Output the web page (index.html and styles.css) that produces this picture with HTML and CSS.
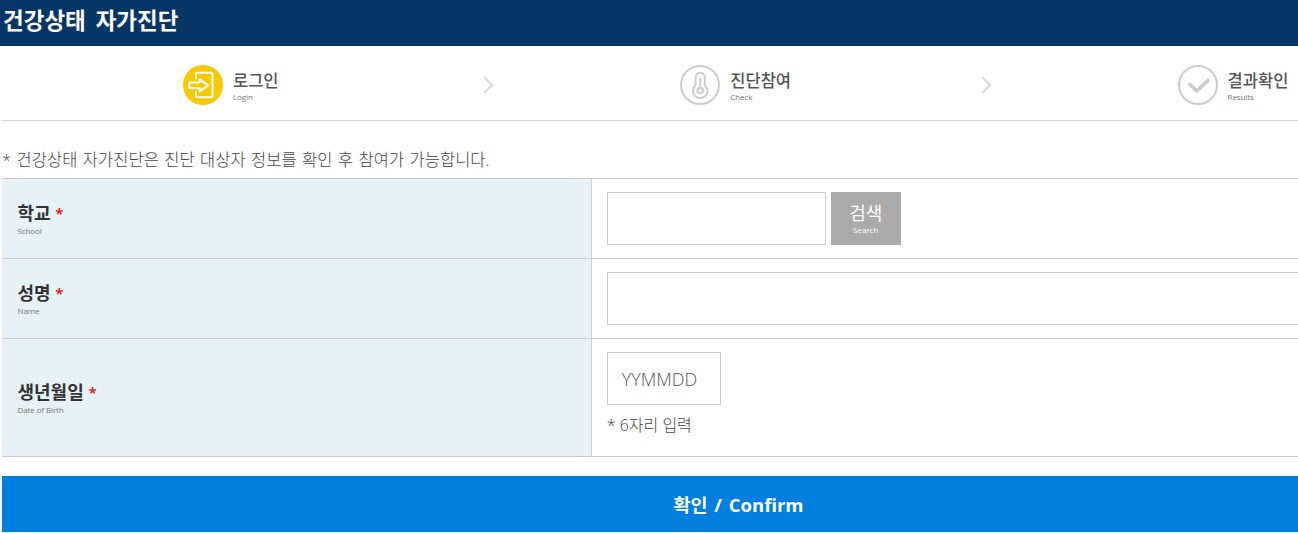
FILE: index.html
```html
<!DOCTYPE html>
<html lang="ko">
<head>
<meta charset="utf-8">
<title>건강상태 자가진단</title>
<link rel="stylesheet" href="styles.css">
</head>

<body>

<div id="header">
    <h1>건강상태 자가진단</h1>
</div>

<div id="container">
    <ul class="step">
        <li class="on">
            <svg class="icon" viewBox="0 0 40 40" width="40" height="40">
                <circle cx="20" cy="20" r="20" fill="#f8c800" />
                <path d="M13 14V9.200Q13 7.700 14.500 7.700H28Q29.500 7.700 29.500 9.200V30.800Q29.500 32.300 28 32.300H14.500Q13 32.300 13 30.800V26.500" />
                <path d="M6.300 17.600H16.800V14.400L25.200 20.400L16.800 26.400V23.200H6.300Z" />
            </svg>
            <p>로그인<span>Login</span></p>
        </li>
        <li>
            <svg class="icon" viewBox="0 0 40 40" width="40" height="40">
                <circle cx="20" cy="20" r="19" />
                <path d="M15.600 20.200V12.400a4.600 4.600 0 0 1 9.200 0V20.200a7.300 7.300 0 1 1 -9.200 0Z" />
                <path d="M20.200 13V22.500" />
                <circle cx="20.200" cy="25.500" r="2.800" />
            </svg>
            <p>진단참여<span>Check</span></p>
        </li>
        <li>
            <svg class="icon" viewBox="0 0 40 40" width="40" height="40">
                <circle cx="20" cy="20" r="19" />
                <path class="check" d="M11.800 19.300L18.700 26L30 15.500" />
            </svg>
            <p>결과확인<span>Results</span></p>
        </li>
    </ul>

    <p class="info">* 건강상태 자가진단은 진단 대상자 정보를 확인 후 참여가 가능합니다.</p>

    <table>
        <tr>
            <th>학교 <em>*</em><span>School</span></th>
            <td>
                <div class="search">
                    <input type="text" name="school" id="school" value="" />
                    <button type="button" id="btn_search">검색<span>Search</span></button>
                </div>
            </td>
        </tr>
        <tr>
            <th>성명 <em>*</em><span>Name</span></th>
            <td><input type="text" name="name" id="name" value="" /></td>
        </tr>
        <tr class="birth">
            <th>생년월일 <em>*</em><span>Date of Birth</span></th>
            <td>
                <input type="text" name="birth" id="birth" value="" placeholder="YYMMDD" maxlength="6" />
                <p>* 6자리 입력</p>
            </td>
        </tr>
    </table>

    <button type="button" id="btn_confirm">확인 / Confirm</button>
</div>

</body>
</html>
```

FILE: styles.css
```css
* {
    box-sizing: border-box;
    margin: 0px;
    padding: 0px;
}

body {
    overflow: hidden;
    background-color: #ffffff;
    color: #555555;
    font-family: 'Malgun Gothic', 'Open Sans', 'Noto Sans CJK KR', sans-serif;
    font-size: 16px;
}

input, button {
    font-family: inherit;
}

#header {
    height: 46px;
    padding-left: 3px;
    background-color: #063666;
    border-bottom: 1px solid #042c58;
}

#header h1 {
    color: #ffffff;
    font-size: 22.500px;
    line-height: 41px;
    font-weight: 700;
    word-spacing: 4px;
}

#container {
    width: 1473px;
    margin-left: 2px;
}

.step {
    display: flex;
    height: 75px;
    border-bottom: 1px solid #d9d9d9;
    list-style: none;
}

.step li {
    display: flex;
    flex: 0 0 497.300px;
    align-items: center;
    padding: 4px 0px 0px 181px;
}

/* arrow between steps */
.step li:not(:last-child)::after {
    content: "";
    width: 10px;
    height: 10px;
    margin: 0px 8px 0px auto;
    border-top: 2px solid #d9d9d9;
    border-right: 2px solid #d9d9d9;
    transform: rotate(45deg);
}

.icon {
    flex: none;
    margin-right: 10px;
    fill: none;
    stroke: #cccccc;
    stroke-width: 2;
    stroke-linejoin: round;
}

.on .icon {
    stroke: #ffffff;
}

.on .icon circle {
    stroke: none;
}

.icon .check {
    stroke-width: 3.6;
    stroke-linecap: round;
}

.step p {
    padding-top: 4px;
    font-size: 16.500px;
    line-height: 20px;
    font-weight: 500;
}

.step span, th span {
    display: block;
    color: #777777;
    font-size: 8px;
    line-height: 12px;
    font-weight: 400;
    letter-spacing: -0.1px;
}

.info {
    height: 57px;
    padding-top: 27px;
    color: #444444;
    font-size: 16.500px;
    line-height: 24px;
    font-weight: 300;
    word-spacing: 1px;
    letter-spacing: 0.050px;
}

table {
    width: 100%;
    table-layout: fixed;
    border-collapse: collapse;
}

tr {
    height: 80px;
    border-top: 1px solid #cccccc;
    border-bottom: 1px solid #cccccc;
}

.birth {
    height: 118px;
}

th {
    width: 40%;
    padding-left: 15.500px;
    border-right: 1px solid #cccccc;
    background-color: #e6f2f7;
    color: #333333;
    font-size: 18px;
    line-height: 24px;
    text-align: left;
}

th em {
    color: #ff0000;
    font-size: 15px;
    font-style: normal;
    line-height: 20px;
    font-weight: 600;
    vertical-align: 1px;
}

td {
    padding: 13px 0px 0px 15px;
    vertical-align: top;
}

td input {
    display: block;
    width: 100%;
    height: 53px;
    padding: 0px 14px;
    border: 1px solid #cccccc;
    font-size: 18px;
    font-weight: 300;
}

td p {
    margin-top: 8px;
    color: #444444;
    line-height: 24px;
    font-weight: 300;
}

#school {
    width: 219px;
}

#birth {
    width: 114px;
}

#birth::placeholder {
    color: #555555;
}

.search {
    display: flex;
    gap: 5px;
}

#btn_search {
    width: 70px;
    height: 53px;
    border: 0px;
    background-color: #aaaaaa;
    color: #ffffff;
    font-size: 18px;
    line-height: 22px;
}

#btn_search span {
    display: block;
    font-size: 8px;
    line-height: 12px;
}

#btn_confirm {
    display: block;
    width: 100%;
    height: 56px;
    margin-top: 19px;
    border: 0px;
    background-color: #007fde;
    color: #ffffff;
    font-size: 18.500px;
    font-weight: 700;
    word-spacing: 2px;
}
```
